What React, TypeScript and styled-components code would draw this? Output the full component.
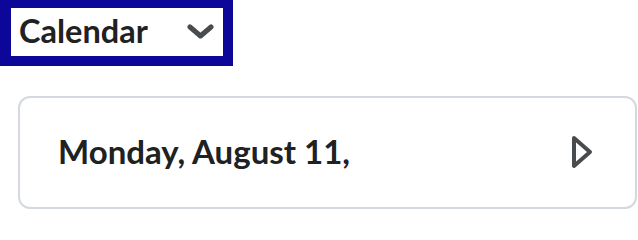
import React from "react";
import styled, { createGlobalStyle } from "styled-components";

const GlobalStyle = createGlobalStyle`
  html, body {
    margin: 0;
    padding: 0;
    background: #ffffff;
  }
  body {
    font-family: Lato, "Open Sans", "Liberation Sans", sans-serif;
    color: #202122;
  }
`;

const SPage = styled.div`
  display: flex;
  flex-direction: column;
  align-items: flex-start;
  width: 638px;
`;

const SHeaderButton = styled.button`
  display: flex;
  align-items: center;
  justify-content: space-between;
  box-sizing: border-box;
  width: 233px;
  height: 66px;
  margin: 0;
  padding: 0 9px 1px 8px;
  border-style: solid;
  border-color: #0c0799;
  border-width: 8px 10px 10px 11px;
  background: #ffffff;
  font-family: Lato, "Liberation Sans", sans-serif;
  font-size: 32.5px;
  font-weight: 700;
  line-height: 1;
  color: #202122;
  cursor: pointer;
`;

const SChevron = styled.svg`
  width: 27px;
  height: 16px;
  flex: none;
`;

const SCard = styled.div`
  display: flex;
  align-items: center;
  justify-content: space-between;
  box-sizing: border-box;
  width: 619px;
  height: 113px;
  margin: 30px 0 0 18px;
  padding: 0 42px 2px 38px;
  border: 2px solid #d3d9de;
  border-radius: 12px;
  background: #ffffff;
`;

const SDate = styled.h2`
  margin: 0;
  font-family: Lato, "Liberation Sans", sans-serif;
  font-size: 33px;
  font-weight: 700;
  line-height: 1;
  color: #202122;
`;

const SNext = styled.svg`
  width: 22px;
  height: 34px;
  flex: none;
`;

export default function App() {
  return (
    <SPage>
      <GlobalStyle />
      <SHeaderButton type="button">
        <span>Calendar</span>
        <SChevron viewBox="0 0 27 16" aria-hidden="true">
          <polyline
            points="3,3 13.5,12 24,3"
            fill="none"
            stroke="#494c4e"
            strokeWidth="5"
            strokeLinecap="round"
            strokeLinejoin="round"
          />
        </SChevron>
      </SHeaderButton>
      <SCard>
        <SDate>Monday, August 11,</SDate>
        <SNext viewBox="0 0 22 34" aria-hidden="true">
          <polygon
            points="3,3 19,17 3,31"
            fill="none"
            stroke="#494c4e"
            strokeWidth="4"
            strokeLinejoin="round"
          />
        </SNext>
      </SCard>
    </SPage>
  );
}
